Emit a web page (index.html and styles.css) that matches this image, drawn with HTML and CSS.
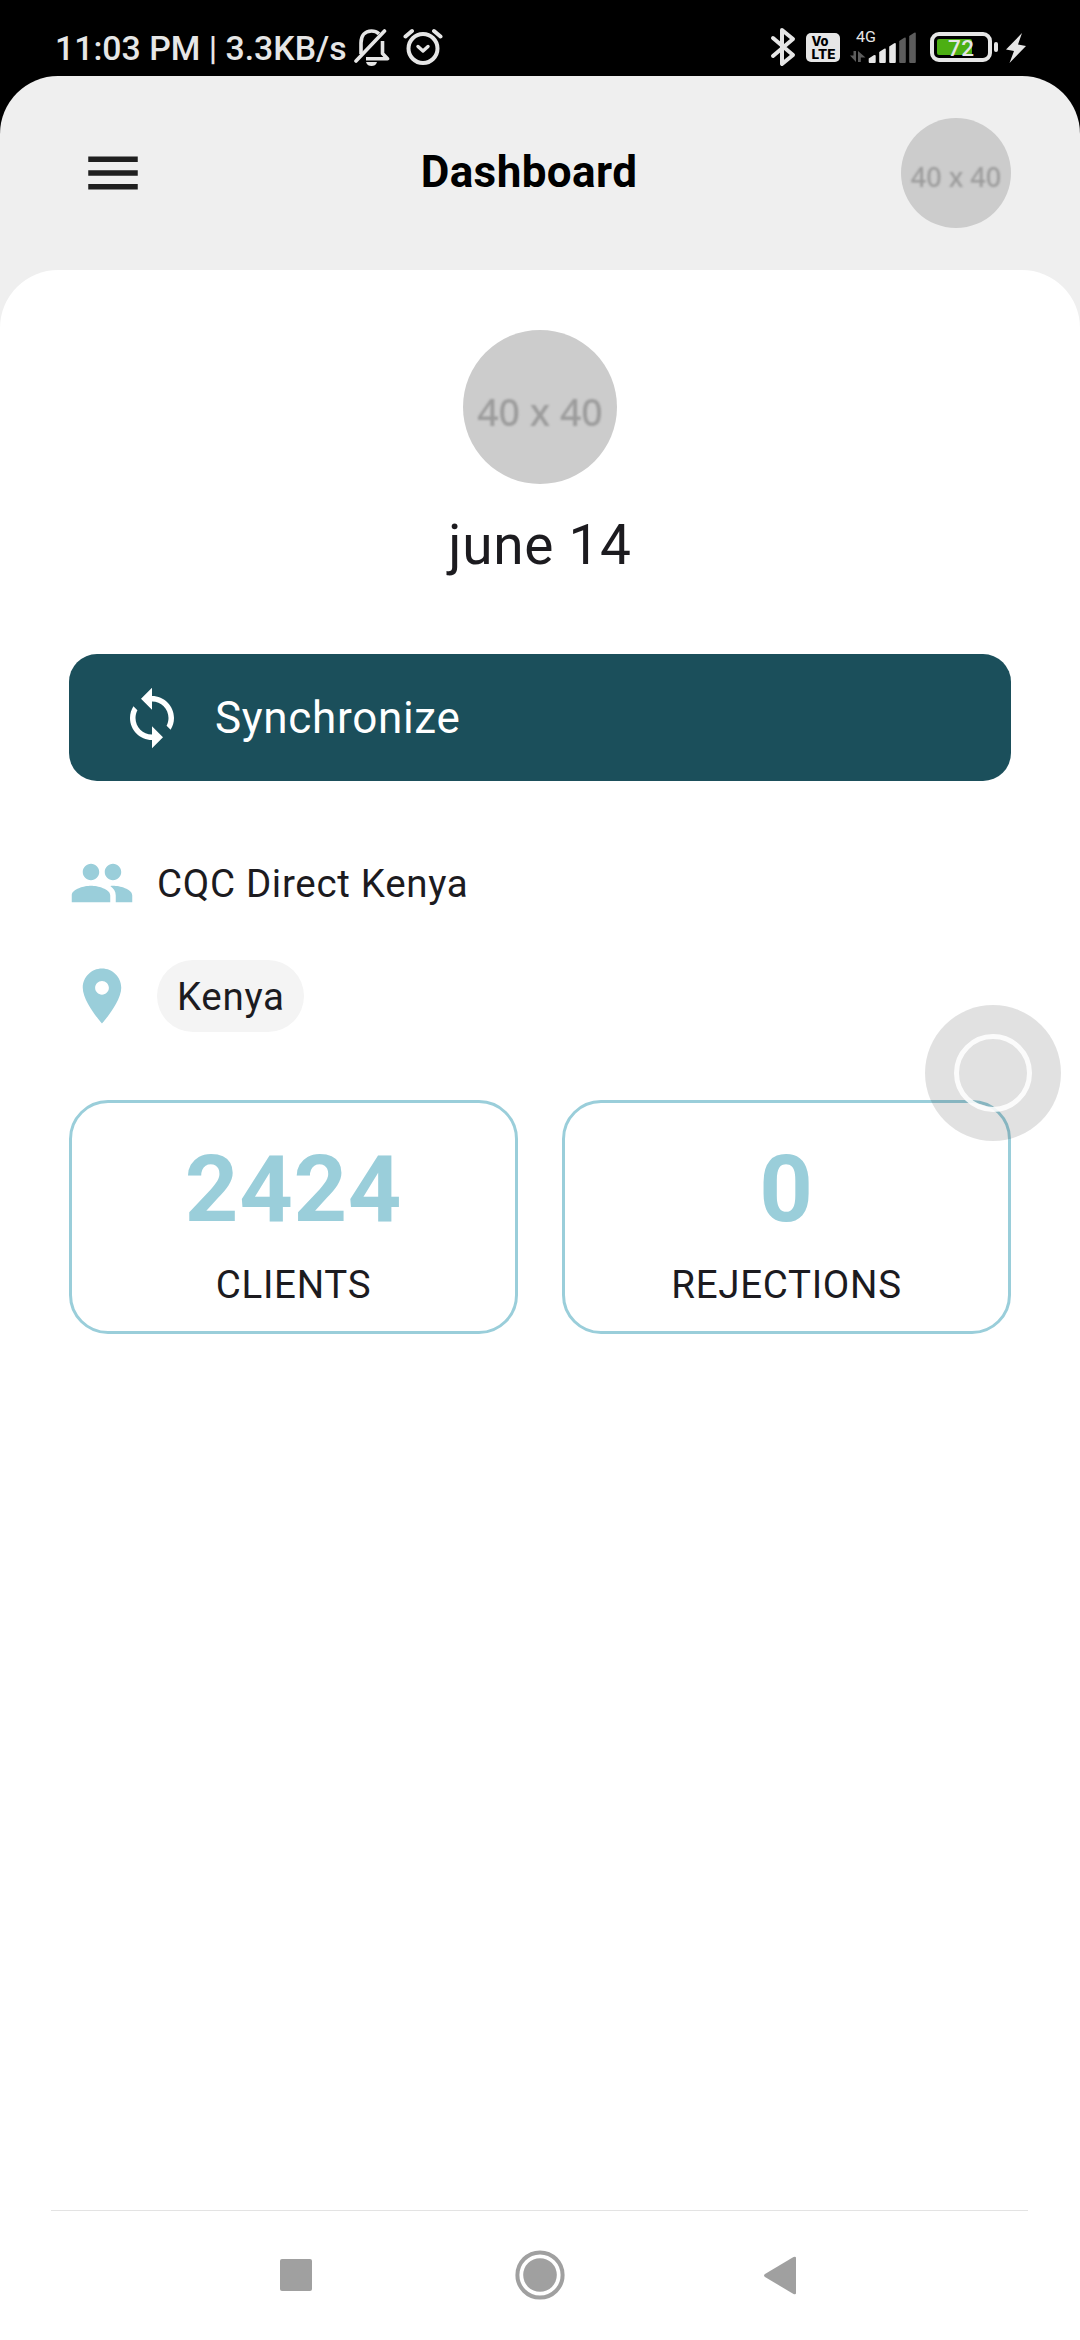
FILE: index.html
```html
<!DOCTYPE html>
<html lang="en">
<head>
<meta charset="utf-8">
<title>Dashboard</title>
<link rel="stylesheet" href="styles.css">
</head>
<body>
<div class="screen">
  <div class="status">
    <span class="clock">11:03 PM | 3.3KB/s</span>
    <svg class="bell" width="36" height="40" viewBox="0 0 36 40" fill="none" stroke="#e6e6e6" stroke-width="3.6">
      <path d="M7 27V16C7 8.500 11 4 17.500 4c3 0 5.500 1 7.500 2.800M28.500 14v12.500l5 5.300H12" stroke-linejoin="round"/>
      <path d="M2 34L30.500 4" stroke-linecap="round"/>
      <path d="M12 35h11c-1 3-3 4-5.500 4s-4.500-1-5.500-4z" fill="#e6e6e6" stroke="none"/>
    </svg>
    <svg class="alarm" width="40" height="40" viewBox="0 0 40 40" fill="none" stroke="#e6e6e6" stroke-width="4">
      <circle cx="20" cy="21.500" r="14.500"/>
      <path d="M2.500 9.500L9 4M37.500 9.500L31 4" stroke-linecap="round"/>
      <path d="M15 19.500l5 4.500 5-4.500" stroke-width="3.400" stroke-linecap="round" stroke-linejoin="round"/>
    </svg>
    <span class="spacer"></span>
    <svg class="bluetooth" width="26" height="40" viewBox="0 0 26 40" fill="none" stroke="#e6e6e6" stroke-width="4" stroke-linejoin="round" stroke-linecap="round">
      <path d="M3 11l20 17-11 9V3l11 9L3 29"/>
    </svg>
    <svg class="volte" width="34" height="29" viewBox="0 0 34 29">
      <rect width="34" height="29" rx="5" fill="#e6e6e6"/>
      <g font-family="Inter, sans-serif" font-weight="800" fill="#000" font-size="13">
        <text x="5.500" y="13.200" textLength="17" lengthAdjust="spacingAndGlyphs">Vo</text>
        <text x="5.500" y="25.500" textLength="24" lengthAdjust="spacingAndGlyphs">LTE</text>
      </g>
    </svg>
    <svg class="signal" width="68" height="44" viewBox="0 -10 68 44">
      <text x="6" y="12" font-family="Roboto, sans-serif" font-size="15.500" fill="#e6e6e6" textLength="20" lengthAdjust="spacingAndGlyphs">4G</text>
      <g fill="#5c5c5c">
        <path d="M3.500 21H6v11L0 25.500h3.500zM8 32h2.800v-4.500H15.500L8 21z"/>
        <path d="M49.200 11l5-3.200q1.600-.8 1.600.8V32q0 1-1 1h-4.600q-1 0-1-1zM59.200 6l5-3.200q1.600-.8 1.600.8V32q0 1-1 1h-4.600q-1 0-1-1z"/>
      </g>
      <g fill="#e6e6e6">
        <path d="M18.700 28.500l5-3.200q2-.8 2 .8V32q0 1-1 1h-5q-1 0-1-1zM29.200 22l5-3.200q1.600-.8 1.600.8V32q0 1-1 1h-4.600q-1 0-1-1zM39.200 16.500l5-3.200q1.600-.8 1.600.8V32q0 1-1 1h-4.600q-1 0-1-1z"/>
      </g>
    </svg>
    <svg class="battery" width="69" height="30" viewBox="0 0 69 30">
      <rect x="2" y="2" width="58" height="26" rx="7" fill="none" stroke="#e6e6e6" stroke-width="4"/>
      <rect x="7" y="7" width="35" height="16" rx="2" fill="#4caf13"/>
      <rect x="64" y="10" width="4" height="10" rx="2" fill="#e6e6e6"/>
      <text x="18" y="23.800" font-family="Roboto, sans-serif" font-weight="500" font-size="22.500" fill="#e6e6e6" textLength="26">72</text>
    </svg>
    <svg class="bolt" width="20" height="30" viewBox="0 0 20 30"><path d="M16 0L0 16.500l8 1.500L3.500 30 20 13l-8-1.500z" fill="#e6e6e6"/></svg>
  </div>

  <div class="app">
    <header class="topbar">
      <svg class="icon" viewBox="0 0 24 24" fill="#1f1f1f"><path d="M3 18h18v-2H3v2zm0-5h18v-2H3v2zm0-7v2h18V6H3z"/></svg>
      <h1 class="title">Dashboard</h1>
      <div class="avatar"><span class="avatar-text">40 x 40</span></div>
    </header>

    <main class="content">
      <div class="profile">
        <div class="avatar avatar-large"><span class="avatar-text">40 x 40</span></div>
        <div class="name">june 14</div>
      </div>

      <div class="sync">
        <svg class="icon" viewBox="0 0 24 24" fill="#fff"><path d="M12 4V1L8 5l4 4V6c3.310 0 6 2.690 6 6 0 1.010-.25 1.970-.7 2.800l1.460 1.460C19.540 15.030 20 13.570 20 12c0-4.420-3.580-8-8-8zm0 14c-3.310 0-6-2.690-6-6 0-1.010.25-1.970.7-2.800L5.240 7.740C4.460 8.970 4 10.430 4 12c0 4.420 3.580 8 8 8v3l4-4-4-4v3z"/></svg>
        <span class="sync-label">Synchronize</span>
      </div>

      <div class="info">
        <svg class="icon" viewBox="0 0 24 24" fill="#9aceda"><path d="M16 11c1.660 0 2.990-1.340 2.990-3S17.660 5 16 5c-1.660 0-3 1.340-3 3s1.340 3 3 3zm-8 0c1.660 0 2.990-1.340 2.990-3S9.660 5 8 5C6.340 5 5 6.340 5 8s1.340 3 3 3zm0 2c-2.330 0-7 1.170-7 3.500V19h14v-2.500c0-2.330-4.670-3.500-7-3.500zm8 0c-.29 0-.62.02-.97.05 1.160.84 1.970 1.970 1.970 3.450V19h6v-2.500c0-2.330-4.670-3.500-7-3.500z"/></svg>
        <span class="body-text">CQC Direct Kenya</span>
      </div>
      <div class="info info-place">
        <svg class="icon" viewBox="0 0 24 24" fill="#9aceda"><path d="M12 2C8.130 2 5 5.130 5 9c0 5.250 7 13 7 13s7-7.750 7-13c0-3.870-3.130-7-7-7zm0 9.500c-1.380 0-2.500-1.120-2.500-2.500s1.120-2.500 2.500-2.500 2.500 1.120 2.500 2.500-1.120 2.500-2.500 2.500z"/></svg>
        <span class="chip body-text">Kenya</span>
      </div>

      <div class="stats">
        <div class="stat"><div class="number">2424</div><div class="label">CLIENTS</div></div>
        <div class="stat"><div class="number">0</div><div class="label">REJECTIONS</div></div>
      </div>
    </main>

    <nav class="navbar">
      <svg width="32" height="32" viewBox="0 0 32 32"><rect width="32" height="32" rx="2" fill="#a0a0a0"/></svg>
      <svg class="nav-home" width="50" height="50" viewBox="0 0 50 50"><circle cx="25" cy="25" r="22.600" fill="none" stroke="#a0a0a0" stroke-width="4"/><circle cx="25" cy="25" r="16.800" fill="#a0a0a0"/></svg>
      <svg class="nav-back" width="32" height="39" viewBox="0 0 32 39"><path d="M29.500 1Q32 0 32 2v35q0 2-2.500 1L1 21q-2-1.500 0-3z" fill="#a0a0a0"/></svg>
    </nav>
  </div>
  <div class="assist"><div class="assist-ring"></div></div>
</div>
</body>
</html>
```
FILE: styles.css
```css
* { box-sizing: border-box; }
body { margin: 0; font-family: Roboto, sans-serif; }
svg { display: block; flex: none; }

.screen {
  position: relative;
  width: 1080px;
  height: 2340px;
  overflow: hidden;
  background: #000;
  display: flex;
  flex-direction: column;
}

/* Status bar */
.status {
  height: 76px;
  display: flex;
  align-items: flex-start;
  padding: 0 54px 0 55px;
  color: #e6e6e6;
}
.clock { font-size: 33.8px; font-weight: 500; line-height: 40px; margin-top: 29px; width: 299px; white-space: nowrap; }
.bell { margin-top: 27px; }
.alarm { margin: 27px 0 0 13px; }
.spacer { flex: 1; }
.bluetooth { margin: 27px 10px 0 0; }
.volte { margin: 33px 10px 0 0; }
.signal { margin: 20px 12px 0 0; }
.battery { margin: 32px 7px 0 0; }
.bolt { margin-top: 33px; }

/* App shell */
.app {
  flex: 1;
  display: flex;
  flex-direction: column;
  background: #efefef;
  border-radius: 58px 58px 0 0;
  overflow: hidden;
}
.topbar {
  height: 194px;
  padding: 0 69px 0 80px;
  display: flex;
  align-items: center;
  justify-content: space-between;
}
.icon { width: 66px; height: 66px; }
.title { margin: 0 0 2px 11px; font-size: 44px; font-weight: 700; line-height: 60px; letter-spacing: 0.41px; color: #000; }
.avatar {
  width: 110px;
  height: 110px;
  border-radius: 50%;
  background: #ccc;
  display: flex;
  align-items: center;
  justify-content: center;
  font: 500 27px/36px "Noto Sans", sans-serif;
  color: #9c9c9c;
  white-space: nowrap;
}
.avatar-text { padding-top: 8px; filter: blur(1px); }
.avatar-large { width: 154px; height: 154px; font-size: 37.5px; line-height: 50px; }
.avatar-large .avatar-text { padding-top: 10px; }

.content {
  flex: 1;
  background: #fff;
  border-radius: 58px 58px 0 0;
  padding: 60px 69px 0;
}
.profile { display: flex; flex-direction: column; align-items: center; }
.name { margin-top: 22px; font-size: 55px; line-height: 78px; letter-spacing: 0.69px; color: #1c1b1f; }

.sync {
  margin-top: 70px;
  height: 127px;
  border-radius: 28px;
  background: #1b4f5b;
  color: #fff;
  display: flex;
  align-items: center;
  gap: 30px;
  padding-left: 50px;
}
.sync-label { font-size: 44px; letter-spacing: 0.69px; }

.info { display: flex; align-items: center; gap: 22px; height: 72px; margin-top: 66px; }
.info-place { margin-top: 41px; }
.body-text { font-size: 38.5px; letter-spacing: 0.69px; color: #1c1b1f; }
.chip { height: 72px; line-height: 73px; padding: 0 19px 0 20px; border-radius: 36px; background: #f4f4f4; }

.stats { display: grid; grid-template-columns: 1fr 1fr; gap: 44px; margin-top: 68px; }
.stat {
  height: 234px;
  border: 3px solid #9aceda;
  border-radius: 39px;
  text-align: center;
  padding-top: 30px;
}
.number { font-size: 93.5px; font-weight: 700; line-height: 112px; letter-spacing: 0.69px; color: #9aceda; }
.label { font-size: 38.5px; line-height: 56px; margin-top: 12px; letter-spacing: 0.69px; color: #1c1b1f; }

/* System navigation */
.navbar {
  height: 130px;
  background: linear-gradient(#e3e3e3, #e3e3e3) 51px 0 / 977px 1px no-repeat #fff;
  display: flex;
  align-items: center;
  padding-left: 280px;
}
.nav-home { margin-left: 203px; }
.nav-back { margin-left: 199px; }

/* Floating assistive button */
.assist {
  position: absolute;
  left: 925px;
  top: 1005px;
  width: 136px;
  height: 136px;
  border-radius: 50%;
  background: rgba(0, 0, 0, 0.118);
  display: flex;
  align-items: center;
  justify-content: center;
}
.assist-ring { width: 78px; height: 78px; border-radius: 50%; border: 5px solid rgba(255, 255, 255, 0.87); }
```
